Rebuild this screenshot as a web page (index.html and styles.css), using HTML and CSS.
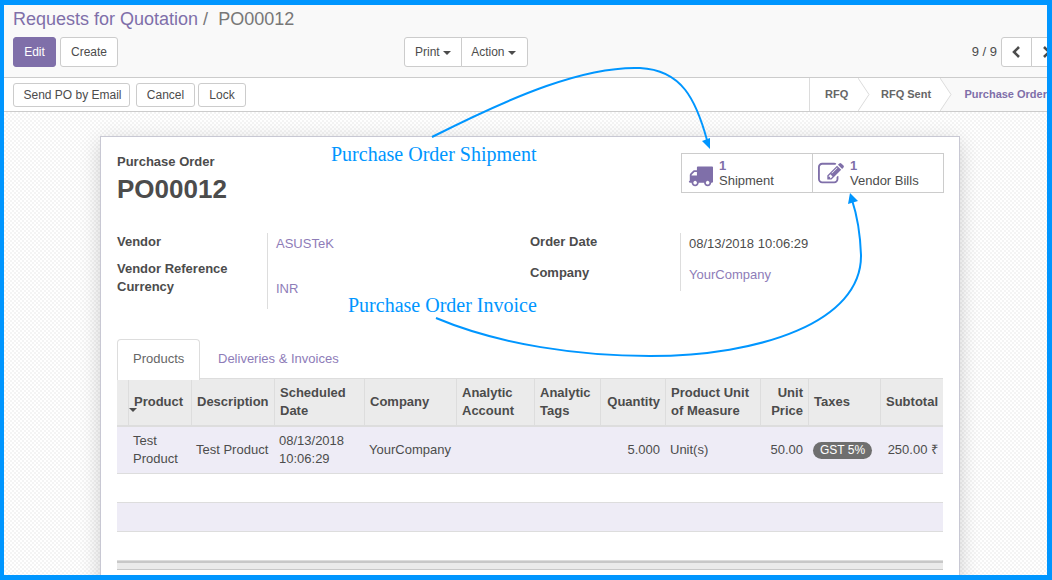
FILE: index.html
```html
<!doctype html>
<html>
<head>
<meta charset="utf-8">
<link rel="stylesheet" href="styles.css">
<title>Requests for Quotation</title>
</head>
<body>
<div class="frame">
  <div class="control-panel">
    <ol class="breadcrumb">
      <li class="crumb-link">Requests for Quotation</li>
      <li class="crumb-sep">/</li>
      <li class="crumb-active">PO00012</li>
    </ol>
    <div class="cp-row">
      <div class="cp-left">
        <button class="btn btn-primary btn-tall">Edit</button>
        <button class="btn btn-tall">Create</button>
      </div>
      <div class="btn-group">
        <button class="btn btn-tall btn-print">Print <span class="caret"></span></button>
        <button class="btn btn-tall btn-action">Action <span class="caret"></span></button>
      </div>
      <div class="pager">
        <span class="pager-value">9 / 9</span>
        <div class="btn-group">
          <button class="btn btn-tall btn-nav">
            <svg width="10" height="14" viewBox="0 0 10 14"><path d="M7 2 L2 7 L7 12" fill="none" stroke="#4c4c4c" stroke-width="2.6"/></svg>
          </button>
          <button class="btn btn-tall btn-nav">
            <svg width="10" height="14" viewBox="0 0 10 14"><path d="M2 2 L7 7 L2 12" fill="none" stroke="#4c4c4c" stroke-width="2.6"/></svg>
          </button>
        </div>
      </div>
    </div>
  </div>

  <div class="status-row">
    <div class="status-buttons">
      <button class="btn btn-send">Send PO by Email</button>
      <button class="btn btn-cancel">Cancel</button>
      <button class="btn btn-lock">Lock</button>
    </div>
    <div class="statusbar">
      <span class="status-step step-rfq">RFQ</span>
      <svg class="chevron" viewBox="0 0 12 33"><path d="M0 0 L11 16.500 L0 33" fill="#fff" stroke="#dcdcdc"/></svg>
      <span class="status-step step-sent">RFQ Sent</span>
      <svg class="chevron chevron-active" viewBox="0 0 12 33"><path d="M0 0 L11 16.500 L0 33" fill="#fff" stroke="#dcdcdc"/></svg>
      <span class="status-step step-current">Purchase Order</span>
    </div>
  </div>

  <div class="sheet-bg">
    <div class="sheet">
      <div class="sheet-top">
        <div class="title">
          <div class="title-label">Purchase Order</div>
          <h1>PO00012</h1>
        </div>
        <div class="button-box">
          <div class="stat-btn stat-shipment">
            <svg class="stat-icon icon-truck" width="25" height="25" viewBox="0 0 1792 1792"><path fill="#7f6fa9" d="M640 1408q0-52-38-90t-90-38-90 38-38 90 38 90 90 38 90-38 38-90zm-384-512h384v-256h-158q-13 0-22 9l-195 195q-9 9-9 22v30zm1280 512q0-52-38-90t-90-38-90 38-38 90 38 90 90 38 90-38 38-90zm256-1088v1024q0 15-4 26.500t-13.500 18.500-16.500 11.500-23.500 6-22.500 2-25.500 0-22.500-.5q0 106-75 181t-181 75-181-75-75-181h-384q0 106-75 181t-181 75-181-75-75-181h-64q-3 0-22.500.5t-25.500 0-22.500-2-23.500-6-16.500-11.500-13.500-18.500-4-26.500q0-26 19-45t45-19v-320q0-8-.5-35t0-38 2.500-34.500 6.500-37 14-30.500 22.500-30l198-198q19-19 50.500-32t58.500-13h160v-192q0-26 19-45t45-19h1024q26 0 45 19t19 45z"/></svg>
            <div class="stat-text"><span class="stat-num">1</span><span>Shipment</span></div>
          </div>
          <div class="stat-btn stat-bills">
            <svg class="stat-icon icon-edit" width="26" height="26" viewBox="0 0 1792 1792"><path fill="#7f6fa9" d="M888 1184l116-116-152-152-116 116v56h96v96h56zm440-720q-16-16-33 1l-350 350q-17 17-1 33t33-1l350-350q17-17 1-33zm80 594v190q0 119-84.500 203.500t-203.500 84.500h-832q-119 0-203.500-84.500t-84.500-203.500v-832q0-119 84.500-203.500t203.500-84.500h832q63 0 117 25 15 7 18 23 3 17-9 29l-49 49q-14 14-32 8-23-6-45-6h-832q-66 0-113 47t-47 113v832q0 66 47 113t113 47h832q66 0 113-47t47-113v-126q0-13 9-22l64-64q15-15 35-7t20 29zm-96-738l288 288-672 672h-288v-288zm444 132l-92 92-288-288 92-92q28-28 68-28t68 28l152 152q28 28 28 68t-28 68z"/></svg>
            <div class="stat-text"><span class="stat-num">1</span><span>Vendor Bills</span></div>
          </div>
        </div>
      </div>

      <div class="form-groups">
        <div class="form-group">
          <div class="labels labels-left">
            <div class="label">Vendor</div>
            <div class="label label-ref">Vendor Reference</div>
            <div class="label label-currency">Currency</div>
          </div>
          <div class="values values-left">
            <div class="value link">ASUSTeK</div>
            <div class="value link value-inr">INR</div>
          </div>
        </div>
        <div class="form-group">
          <div class="labels">
            <div class="label">Order Date</div>
            <div class="label label-company">Company</div>
          </div>
          <div class="values values-right">
            <div class="value">08/13/2018 10:06:29</div>
            <div class="value link value-company">YourCompany</div>
          </div>
        </div>
      </div>

      <div class="tabs">
        <div class="tab tab-active">Products</div>
        <div class="tab link">Deliveries &amp; Invoices</div>
      </div>

      <table class="lines">
        <colgroup>
          <col class="c-handle"><col class="c-product"><col class="c-desc"><col class="c-date"><col class="c-company"><col class="c-account"><col class="c-tags"><col class="c-qty"><col class="c-uom"><col class="c-price"><col class="c-taxes"><col class="c-subtotal">
        </colgroup>
        <thead>
          <tr>
            <th></th>
            <th class="sorted">Product</th>
            <th>Description</th>
            <th>Scheduled Date</th>
            <th>Company</th>
            <th>Analytic Account</th>
            <th>Analytic Tags</th>
            <th class="num">Quantity</th>
            <th>Product Unit of Measure</th>
            <th class="num">Unit Price</th>
            <th>Taxes</th>
            <th class="num">Subtotal</th>
          </tr>
        </thead>
        <tbody>
          <tr class="odd">
            <td></td>
            <td>Test Product</td>
            <td class="nowrap">Test Product</td>
            <td>08/13/2018 10:06:29</td>
            <td>YourCompany</td>
            <td></td>
            <td></td>
            <td class="num">5.000</td>
            <td>Unit(s)</td>
            <td class="num">50.00</td>
            <td><span class="badge">GST 5%</span></td>
            <td class="num nowrap">250.00 ₹</td>
          </tr>
          <tr class="empty"><td colspan="12"></td></tr>
          <tr class="empty odd"><td colspan="12"></td></tr>
          <tr class="empty"><td colspan="12"></td></tr>
        </tbody>
      </table>
      <div class="lines-foot"></div>
    </div>
  </div>

  <svg class="arrows" width="1052" height="580" viewBox="0 0 1052 580">
    <path d="M432 137 C 515 95, 585 66, 640 68 C 682 70, 696 100, 707 140" fill="none" stroke="#0096ff" stroke-width="2"/>
    <path d="M710 149 L702 141 L710 138 Z" fill="#0096ff"/>
    <path d="M436 318 C 500 345, 580 356, 650 356 C 760 356, 862 322, 861 255 C 860 228, 856 212, 852 200" fill="none" stroke="#0096ff" stroke-width="2"/>
    <path d="M850 193 L858 201 L848 204 Z" fill="#0096ff"/>
  </svg>
  <span class="note note-shipment">Purchase Order Shipment</span>
  <span class="note note-invoice">Purchase Order Invoice</span>
</div>
</body>
</html>
```
FILE: styles.css
```css
* {
    box-sizing: border-box;
}
body {
    margin: 0;
    font-family: "Liberation Sans", Arial, sans-serif;
    font-size: 13px;
    line-height: 18px;
    color: #4c4c4c;
}
.frame {
    position: relative;
    width: 1052px;
    height: 580px;
    border: solid #0096ff;
    border-width: 5px 5px 5px 4px;
    overflow: hidden;
    display: flex;
    flex-direction: column;
    background: #fff;
}
.link {
    color: #8e7cb8;
}

/* control panel */
.control-panel {
    height: 73px;
    flex: none;
    padding: 3px 0 0 9px;
    background: #f9f9f9;
    border-bottom: 1px solid #ccc;
}
.breadcrumb {
    display: flex;
    margin: 0;
    padding: 0;
    list-style: none;
    font-size: 18px;
    line-height: 23px;
    color: #777;
}
.crumb-link {
    color: #7f6fa9;
}
.crumb-sep {
    margin: 0 10px 0 5px;
    color: #777;
}
.cp-row {
    display: flex;
    align-items: center;
    margin-top: 6px;
}
.cp-left {
    display: flex;
    gap: 4px;
    width: 391px;
}
.btn {
    height: 24px;
    padding: 0;
    border: 1px solid #ccc;
    border-radius: 3px;
    background: #fff;
    color: #4c4c4c;
    font-family: inherit;
    font-size: 12px;
    line-height: 18px;
}
.btn-tall {
    height: 30px;
}
.btn-primary {
    width: 43px;
    background: #7f6fa9;
    border-color: #7f6fa9;
    color: #fff;
}
.cp-left .btn:nth-child(2) {
    width: 58px;
}
.btn-group {
    display: flex;
}
.btn-group .btn + .btn {
    margin-left: -1px;
    border-radius: 0 3px 3px 0;
}
.btn-group .btn:first-child {
    border-radius: 3px 0 0 3px;
}
.btn-print {
    width: 58px;
}
.btn-action {
    width: 67px;
    padding-right: 2px;
}
.caret {
    display: inline-block;
    vertical-align: middle;
    border-top: 4px solid #4c4c4c;
    border-left: 4px solid transparent;
    border-right: 4px solid transparent;
}
.pager {
    display: flex;
    align-items: center;
    margin-left: auto;
    margin-right: -15px;
    gap: 4px;
}
.pager-value {
    color: #4c4c4c;
}
.btn-nav {
    width: 31px;
    display: flex;
    align-items: center;
    justify-content: center;
}

/* status row */
.status-row {
    height: 34px;
    flex: none;
    display: flex;
    justify-content: space-between;
    background: #fff;
    border-bottom: 1px solid #ccc;
}
.status-buttons {
    display: flex;
    gap: 3px;
    padding: 5px 0 0 9px;
}
.btn-send {
    width: 117px;
    margin-right: 3px;
    padding-left: 2px;
}
.btn-cancel {
    width: 59px;
}
.btn-lock {
    width: 48px;
}
.statusbar {
    display: flex;
    width: 238px;
    border-left: 1px solid #dcdcdc;
    font-size: 11px;
    font-weight: bold;
    line-height: 33px;
    color: #666;
    white-space: nowrap;
    overflow: hidden;
}
.status-step {
    height: 33px;
}
.step-rfq {
    padding: 0 10px 0 15px;
    width: 48px;
}
.step-sent {
    padding-left: 11px;
    width: 71px;
}
.step-current {
    flex: 1;
    padding-left: 12px;
    background: #f9f9f9;
    color: #7f6fa9;
}
.chevron {
    flex: none;
    width: 12px;
    height: 33px;
}
.chevron-active {
    background: #f9f9f9;
}

/* sheet */
.sheet-bg {
    flex: 1;
    min-height: 0;
    padding: 24px 0 0 96px;
    overflow: hidden;
    background: repeating-conic-gradient(#f4f4f4 0 25%, #fff 0 50%) 0 0 / 4px 4px;
}
.sheet {
    width: 860px;
    height: 500px;
    padding: 16px 16px 0;
    background: #fff;
    border: 1px solid #c8c8d3;
    box-shadow: 0 5px 20px -1px rgba(0, 0, 0, 0.2);
}
.sheet-top {
    display: flex;
    justify-content: space-between;
    height: 80px;
    margin-right: -1px;
}
.title-label {
    font-weight: bold;
}
.sheet h1 {
    margin: 2px 0 0;
    font-size: 26px;
    line-height: 33px;
}
.button-box {
    display: flex;
    width: 263px;
    height: 40px;
    border: 1px solid #ccc;
}
.stat-btn {
    display: flex;
    align-items: center;
    gap: 6px;
}
.stat-btn + .stat-btn {
    border-left: 1px solid #ccc;
}
.stat-shipment {
    flex: 0 0 130px;
    padding-left: 6px;
}
.stat-bills {
    flex: 1;
    padding-left: 5px;
}
.icon-truck {
    margin-top: 4px;
}
.icon-edit {
    margin-top: 2px;
}
.stat-text {
    display: flex;
    flex-direction: column;
    line-height: 15px;
}
.stat-num {
    color: #7f6fa9;
    font-weight: bold;
}
.form-groups {
    display: flex;
    height: 76px;
}
.form-group {
    display: flex;
    width: 413px;
}
.labels {
    width: 150px;
    font-weight: bold;
}
.labels-left {
    width: 150px;
}
.label-ref {
    margin-top: 9px;
}
.label-company {
    margin-top: 13px;
}
.values {
    border-left: 1px solid #ddd;
    padding-left: 8px;
    flex: 1;
}
.values-left {
    height: 76px;
}
.values-right {
    height: 58px;
}
.value {
    padding-top: 2px;
}
.value-inr {
    margin-top: 25px;
}
.value-company {
    margin-top: 11px;
}

/* tabs and table */
.tabs {
    display: flex;
    height: 40px;
    position: relative;
    z-index: 1;
    margin-top: 30px;
    margin-bottom: -1px;
}
.tab {
    padding: 11px 18px 0;
    height: 41px;
}
.tab-active {
    width: 83px;
    padding: 10px 0 0 15px;
    background: #fff;
    border: 1px solid #ddd;
    border-bottom: 0;
    border-radius: 4px 4px 0 0;
    color: #666;
}
.lines {
    width: 826px;
    table-layout: fixed;
    border-collapse: separate;
    border-spacing: 0;
}
.c-handle { width: 12px; }
.c-product { width: 63px; }
.c-desc { width: 83px; }
.c-date { width: 90px; }
.c-company { width: 92px; }
.c-account { width: 78px; }
.c-tags { width: 66px; }
.c-qty { width: 65px; }
.c-uom { width: 95px; }
.c-price { width: 48px; }
.c-taxes { width: 72px; }
.c-subtotal { width: 62px; }
.lines th {
    position: relative;
    padding: 5px;
    height: 48px;
    background: #ebebeb;
    border-top: 1px solid #ddd;
    border-right: 1px solid #ddd;
    border-bottom: 2px solid #ddd;
    text-align: left;
    font-weight: bold;
    color: #4c4c4c;
}
.lines th:last-child {
    border-right: 0;
}
.lines th.num,
.lines td.num {
    text-align: right;
}
.lines th.sorted::after {
    content: "";
    position: absolute;
    left: 0;
    top: 29px;
    border-top: 4px solid #4c4c4c;
    border-left: 4px solid transparent;
    border-right: 4px solid transparent;
}
.lines td {
    padding: 5px 5px 5px 4px;
    height: 47px;
    border-bottom: 1px solid #ddd;
}
.lines td.num {
    padding-right: 6px;
}
.lines td.num:last-child {
    padding-right: 5px;
}
.lines .empty td {
    height: 29px;
    padding: 0;
}
.lines .odd td {
    background: #eeecf6;
}
.nowrap {
    white-space: nowrap;
}
.badge {
    display: inline-block;
    padding: 0 7px;
    border-radius: 9px;
    background: #6f6f6f;
    color: #fff;
    font-size: 12px;
    line-height: 17px;
    white-space: nowrap;
}
.lines-foot {
    height: 9px;
    background: #ebebeb;
    border-top: 2px solid #c8c8c8;
    border-bottom: 1px solid #c8c8c8;
}

/* annotations over the screenshot */
.arrows {
    position: absolute;
    left: -4px;
    top: -5px;
    pointer-events: none;
}
.note {
    position: absolute;
    font-family: "Liberation Serif", "Times New Roman", serif;
    font-size: 20px;
    line-height: 24px;
    color: #0096ff;
    white-space: nowrap;
}
.note-shipment {
    left: 327px;
    top: 137px;
}
.note-invoice {
    left: 344px;
    top: 288px;
}
```
